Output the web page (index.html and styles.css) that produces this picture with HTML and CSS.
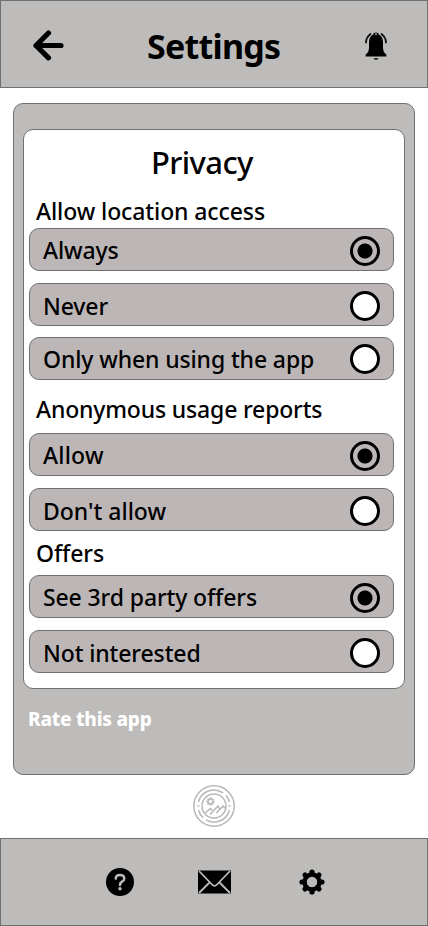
FILE: index.html
```html
<!DOCTYPE html>
<html lang="en">
<head>
<meta charset="utf-8">
<title>Settings</title>
<link rel="stylesheet" href="styles.css">
</head>
<body>
<div class="screen">
  <header class="bar header">
    <svg class="back" viewBox="0 0 32 32"><path d="M16.500 4 4 16.500 16.500 28.800M4 16.500H29" fill="none" stroke="#000" stroke-width="5.200" stroke-linecap="round" stroke-linejoin="round"/></svg>
    <h1 class="title">Settings</h1>
    <svg class="bell" viewBox="0 0 24 30"><path d="M1.700 23.500Q4.700 21.500 5 17V11Q5.100 5.500 9 3.800Q9.300 1.500 12 1.500T15 3.800Q18.900 5.500 19 11V17Q19.300 21.500 22.300 23.500V25.500H1.700Z"/><path d="M9.500 27.200H14.500Q14 28.700 12 28.700T9.500 27.200Z"/><path d="M2 11.500Q2 6.500 6.500 3M22 11.500Q22 6.500 17.500 3" fill="none" stroke="#111" stroke-width="1.800" stroke-linecap="round"/><circle cx="12" cy="3.200" r=".9" fill="#bdbcba"/></svg>
  </header>
  <main class="panel">
    <section class="card">
      <h2 class="heading">Privacy</h2>
      <h3 class="label label-location">Allow location access</h3>
      <div class="group group-location">
        <div class="option"><span>Always</span><i class="radio checked"></i></div>
        <div class="option low"><span>Never</span><i class="radio"></i></div>
        <div class="option using"><span>Only when using the app</span><i class="radio"></i></div>
      </div>
      <h3 class="label label-reports">Anonymous usage reports</h3>
      <div class="group">
        <div class="option"><span class="allow">Allow</span><i class="radio checked"></i></div>
        <div class="option low"><span class="deny">Don't allow</span><i class="radio"></i></div>
      </div>
      <h3 class="label label-offers">Offers</h3>
      <div class="group">
        <div class="option"><span>See 3rd party offers</span><i class="radio checked"></i></div>
        <div class="option low"><span>Not interested</span><i class="radio"></i></div>
      </div>
    </section>
    <p class="rate">Rate this app</p>
  </main>
  <div class="brand">
    <svg class="logo" viewBox="0 0 42 42" fill="none" stroke="#b7b7b7" stroke-width="1.500"><circle cx="21" cy="21" r="20.200"/><path d="M5.500 17A16 16 0 0 1 30 7.800M33 10.400A16 16 0 0 1 36.500 17M36.500 25A16 16 0 0 1 13 34.900M10 32.600A16 16 0 0 1 5.500 25"/><circle cx="21" cy="21" r="12"/><circle cx="17.500" cy="16.500" r="2.400"/><path d="M17.500 12.200V14M17.500 19V20.800M13.200 16.500H15M20 16.500H21.800M14.500 13.500 15.700 14.700M20.500 13.500 19.300 14.700M14.500 19.500 15.700 18.300M20.500 19.500 19.300 18.300M12 28 17.500 23.500 19 25.500M17 29.500 25 21 26.500 24M23.500 28 30 21 32 23M4.500 21H6.500M35.500 21H37.500"/></svg>
  </div>
  <footer class="bar footer">
    <svg class="help" viewBox="0 0 28 28"><circle cx="14" cy="14" r="14"/><path d="M9.700 10.600Q9.800 7 14 7T18.300 10.500Q18.300 12.500 16 13.700Q14 14.800 14 17" fill="none" stroke="#bdbcba" stroke-width="2.500" stroke-linecap="round"/><circle cx="14" cy="20.700" r="1.700" fill="#bdbcba"/></svg>
    <svg class="mail" viewBox="0 0 33 24"><path d="M0 .5H33V23.500H0Z"/><path d="M1 1 14 14.500Q16.500 17.300 19 14.500L32 1M1 23 11.500 12.500M32 23 21.500 12.500" fill="none" stroke="#bdbcba" stroke-width="1.800"/></svg>
    <svg class="gear" viewBox="0 0 26 26" fill="none" stroke="#000"><circle cx="13" cy="13" r="7.500" stroke-width="4.400"/><path d="M13 3V5M13 21V23M3 13H5M21 13H23M6 6 7.500 7.500M18.500 18.500 20 20M20 6 18.500 7.500M7.500 18.500 6 20" stroke-width="5.200" stroke-linecap="round"/></svg>
  </footer>
</div>
</body>
</html>
```
FILE: styles.css
```css
* { box-sizing: border-box; margin: 0; padding: 0; }
body { background: #fff; color: #000; font-family: "Noto Sans", "Open Sans", sans-serif; }
.screen { width: 428px; height: 926px; display: flex; flex-direction: column; }
.bar { height: 88px; background: #bdbcba; border: 1px solid #707070; display: flex; flex: none; }
svg { display: block; flex: none; }
.header { padding-left: 31px; }
.back { width: 32px; height: 32px; margin-top: 28px; }
.title { width: 133px; margin-left: 83px; margin-top: 10px; font-size: 34px; line-height: 70px; font-weight: 700; letter-spacing: -0.75px; white-space: nowrap; }
.bell { width: 24px; height: 30px; margin: 30px 0 0 84px; }
.panel { width: 402px; height: 672px; margin: 15px 0 0 13px; padding: 25px 9px 0; background: #bdbcba; border: 1px solid #707070; border-radius: 10px; flex: none; }
.card { width: 382px; height: 560px; background: #fff; border: 1px solid #707070; border-radius: 10px; padding: 0 5px; display: flex; flex-direction: column; }
.heading { height: 66px; padding-left: 122px; font-size: 31px; line-height: 65px; font-weight: 500; letter-spacing: -0.6px; white-space: nowrap; }
.label { padding-left: 7px; font-size: 23px; font-weight: 500; letter-spacing: -0.1px; white-space: nowrap; }
.label-location { height: 32px; line-height: 30px; }
.label-reports { height: 53px; padding-top: 13px; line-height: 32px; letter-spacing: -0.17px; }
.label-offers { height: 44px; padding-top: 6px; line-height: 32px; }
.group { display: grid; gap: 12px; }
.group-location { grid-template-rows: 43px 43px 43px; height: 152px; }
.option { width: 365px; height: 43px; background: #bdb6b6; border: 1px solid #707070; border-radius: 10px; display: flex; justify-content: space-between; padding: 0 13px; font-size: 23px; line-height: 43px; font-weight: 500; letter-spacing: -0.12px; white-space: nowrap; }
.option.low span { padding-top: 1px; }
.using { margin-top: -1px; }
.allow { letter-spacing: 0.2px; }
.deny { letter-spacing: 0; }
.radio { width: 30px; height: 30px; margin-top: 7px; border: 3px solid #000; border-radius: 50%; background: #fff; flex: none; }
.using .radio { margin-top: 6px; }
.checked { background: radial-gradient(circle, #000 7px, #bdb6b6 8px); }
.rate { margin: 16px 0 0 5px; font-size: 19px; line-height: 28px; font-weight: 800; color: #fff; letter-spacing: -0.22px; white-space: nowrap; }
.brand { height: 63px; padding: 10px 0 0 193px; flex: none; }
.logo { width: 42px; height: 42px; }
.footer { padding-left: 105px; }
.help { width: 28px; height: 28px; margin-top: 29px; }
.mail { width: 33px; height: 24px; margin: 31px 0 0 64px; }
.gear { width: 26px; height: 26px; margin: 29.500px 0 0 67.500px; }
```
